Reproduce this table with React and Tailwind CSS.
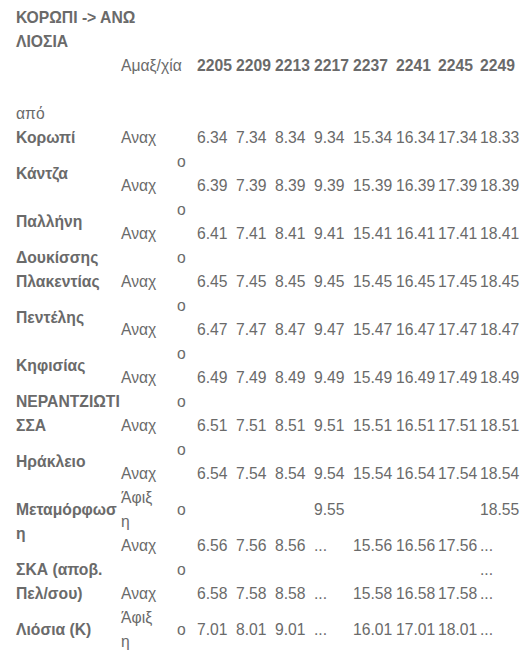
const COLS = ['w-[39px]', 'w-[39px]', 'w-[39px]', 'w-[39px]', 'w-[43px]', 'w-[42px]', 'w-[42px]', 'w-[43px]']
const TRIPS = ['2205', '2209', '2213', '2217', '2237', '2241', '2245', '2249']

const rep = (m) => [`6.${m}`, `7.${m}`, `8.${m}`, `9.${m}`, `15.${m}`, `16.${m}`, `17.${m}`, `18.${m}`]

// regular stops: two-line rows, "ο" sits on top, departures on the bottom line
const STOPS = [
  { name: ['Κάντζα'], times: rep('39') },
  { name: ['Παλλήνη'], times: rep('41') },
  { name: ['Δουκίσσης', 'Πλακεντίας'], times: rep('45') },
  { name: ['Πεντέλης'], times: rep('47') },
  { name: ['Κηφισίας'], times: rep('49') },
  { name: ['ΝΕΡΑΝΤΖΙΩΤΙ', 'ΣΣΑ'], times: rep('51') },
  { name: ['Ηράκλειο'], times: rep('54') },
]

const cell = 'p-0 pl-[3px] leading-6 whitespace-nowrap'

function Lines({ lines }) {
  return lines.map((l, i) => (
    <span key={i} className="block">{l}</span>
  ))
}

function TimeCells({ times, align = 'align-bottom' }) {
  return times.map((t, i) => (
    <td key={i} className={`${cell} ${align}`}>{t}</td>
  ))
}

export default function App() {
  return (
    <div className="min-h-screen bg-white pt-[6px] text-[15.7px] text-[#6a6a6a] font-['Liberation_Sans',Arial,sans-serif]">
      <div className="pl-[16px] font-bold leading-6">
        ΚΟΡΩΠΙ -&gt; ΑΝΩ<br />ΛΙΟΣΙΑ
      </div>

      <table className="ml-[13px] w-[507px] table-fixed border-collapse">
        <colgroup>
          <col className="w-[105px]" />
          <col className="w-[56px]" />
          <col className="w-[20px]" />
          {COLS.map((w, i) => <col key={i} className={w} />)}
        </colgroup>
        <tbody>
          <tr className="h-6">
            <td className={cell}></td>
            <td colSpan={2} className={cell}>Αμαξ/χία</td>
            {TRIPS.map((t) => (
              <th key={t} className={`${cell} text-left font-bold`}>{t}</th>
            ))}
          </tr>
          <tr className="h-6">
            <td colSpan={11} className={cell}></td>
          </tr>
          <tr className="h-6">
            <td colSpan={11} className={cell}>από</td>
          </tr>
          <tr className="h-6">
            <td className={`${cell} font-bold`}>Κορωπί</td>
            <td className={cell}>Αναχ</td>
            <td className={cell}></td>
            <TimeCells times={['6.34', '7.34', '8.34', '9.34', '15.34', '16.34', '17.34', '18.33']} />
          </tr>

          {STOPS.map((s) => (
            <tr key={s.name.join()} className="h-12">
              <td className={`${cell} align-middle font-bold`}><Lines lines={s.name} /></td>
              <td className={`${cell} align-bottom`}>Αναχ</td>
              <td className={`${cell} align-top`}>ο</td>
              <TimeCells times={s.times} />
            </tr>
          ))}

          {/* Μεταμόρφωση: arrival + departure */}
          <tr className="h-12">
            <td rowSpan={2} className={`${cell} align-middle font-bold`}>
              <Lines lines={['Μεταμόρφωσ', 'η']} />
            </td>
            <td className={`${cell} align-middle`}><Lines lines={['Άφιξ', 'η']} /></td>
            <td className={`${cell} align-middle`}>ο</td>
            <TimeCells align="align-middle" times={['', '', '', '9.55', '', '', '', '18.55']} />
          </tr>
          <tr className="h-6">
            <td className={cell}>Αναχ</td>
            <td className={cell}></td>
            <TimeCells times={['6.56', '7.56', '8.56', '...', '15.56', '16.56', '17.56', '...']} />
          </tr>

          <tr className="h-12">
            <td className={`${cell} align-middle font-bold`}>
              <Lines lines={['ΣΚΑ (αποβ.', 'Πελ/σου)']} />
            </td>
            <td className={`${cell} align-bottom`}>Αναχ</td>
            <td className={`${cell} align-top`}>ο</td>
            <TimeCells times={['6.58', '7.58', '8.58', '...', '15.58', '16.58', '17.58']} />
            <td className={`${cell} align-bottom`}><Lines lines={['...', '...']} /></td>
          </tr>

          <tr className="h-12">
            <td className={`${cell} align-middle font-bold`}>Λιόσια (Κ)</td>
            <td className={`${cell} align-middle`}><Lines lines={['Άφιξ', 'η']} /></td>
            <td className={`${cell} align-middle`}>ο</td>
            <TimeCells align="align-middle" times={['7.01', '8.01', '9.01', '...', '16.01', '17.01', '18.01', '...']} />
          </tr>
        </tbody>
      </table>
    </div>
  )
}
